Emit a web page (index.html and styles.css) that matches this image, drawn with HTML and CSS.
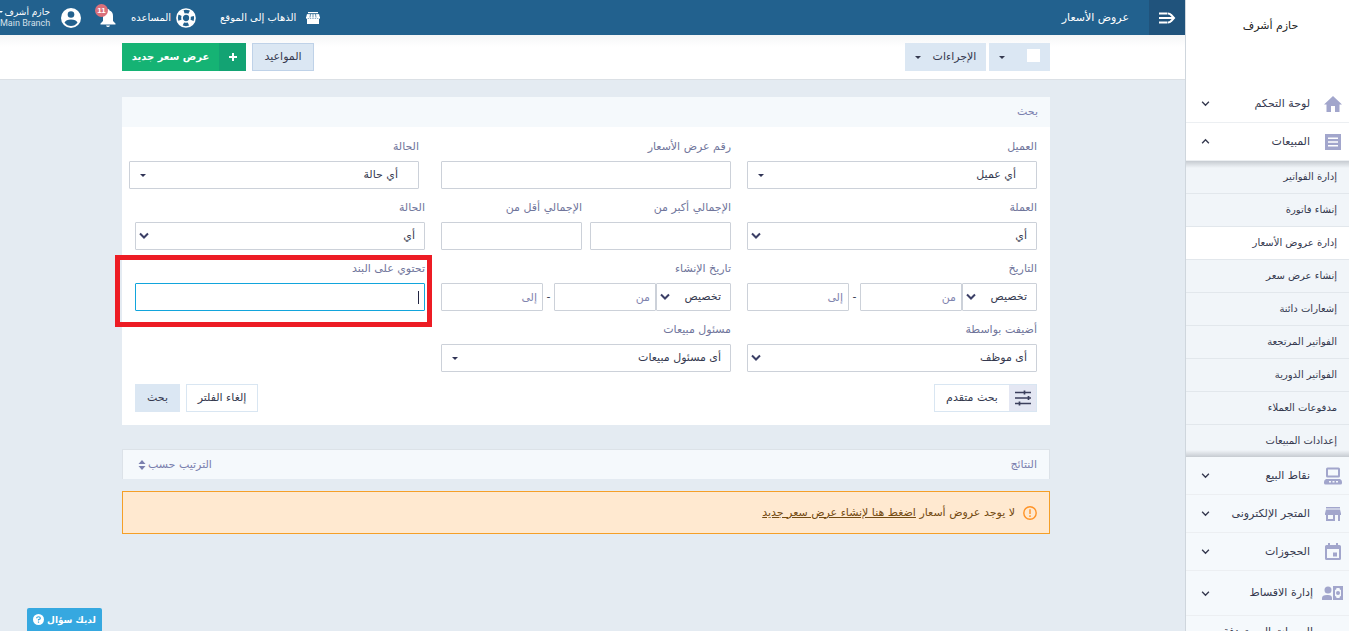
FILE: index.html
```html
<!DOCTYPE html>
<html lang="ar" dir="rtl">
<head>
<meta charset="utf-8">
<title>عروض الأسعار</title>
<link rel="stylesheet" href="styles.css">
</head>
<body>
<div class="app">
  <aside class="sidebar">
    <div class="brand">حازم أشرف</div>
    <nav>
      <a class="nav-item" href="#"><svg class="nav-icon" viewBox="0 0 18 18"><path d="M9 1 0 9.500h2.500V17h4.500v-6h4v6h4.500V9.500H18z"/></svg><span>لوحة التحكم</span><svg class="chev" viewBox="0 0 8 8"><path d="M1 2.500 4 5.500 7 2.500"/></svg></a>
      <a class="nav-item" href="#"><svg class="nav-icon" viewBox="0 0 18 18"><path fill-rule="evenodd" d="M1 1h16v16H1zM4 4.500v1.500h10V4.500zM4 8.200v1.600h10V8.200zM4 12v1.500h10V12z"/></svg><span>المبيعات</span><svg class="chev" viewBox="0 0 8 8"><path d="M1 5.500 4 2.500 7 5.500"/></svg></a>
      <div class="subnav">
        <a href="#">إدارة الفواتير</a>
        <a href="#">إنشاء فاتورة</a>
        <a href="#" class="current">إدارة عروض الأسعار</a>
        <a href="#">إنشاء عرض سعر</a>
        <a href="#">إشعارات دائنة</a>
        <a href="#">الفواتير المرتجعة</a>
        <a href="#">الفواتير الدورية</a>
        <a href="#">مدفوعات العملاء</a>
        <a href="#">إعدادات المبيعات</a>
      </div>
      <a class="nav-item soft" href="#"><svg class="nav-icon" viewBox="0 0 18 18"><path fill-rule="evenodd" d="M2 2Q2 .5 3.500.5h11Q16 .5 16 2v7q0 1.500-1.500 1.500h-11Q2 10.500 2 9zM4 2.500v6h10v-6zM2 12h14q2 1 2 3v1q0 1.500-1.500 1.500h-15Q0 17.500 0 16v-1q0-2 2-3zM5 14v1.500h2V14zM8.500 14v1.500h2V14zM12 14v1.500h2V14z"/></svg><span>نقاط البيع</span><svg class="chev" viewBox="0 0 8 8"><path d="M1 2.500 4 5.500 7 2.500"/></svg></a>
      <a class="nav-item soft" href="#"><svg class="nav-icon" viewBox="0 0 18 18"><path fill-rule="evenodd" d="M2 2h14v1.500H2zM2 4.500h14l1 4V10h-1v6h-2v-6h-3v6H2v-6H1V8.500zM4 10v4h5v-4z"/></svg><span>المتجر الإلكترونى</span><svg class="chev" viewBox="0 0 8 8"><path d="M1 2.500 4 5.500 7 2.500"/></svg></a>
      <a class="nav-item soft" href="#"><svg class="nav-icon" viewBox="0 0 18 18"><path fill-rule="evenodd" d="M4 0h2v2h6V0h2v2h1.500Q17 2 17 3.500v12q0 1.500-1.500 1.500h-13Q1 17 1 15.500v-12Q1 2 2.500 2H4zM3 6v9h12V6zM9 9.500h4v4H9z"/></svg><span>الحجوزات</span><svg class="chev" viewBox="0 0 8 8"><path d="M1 2.500 4 5.500 7 2.500"/></svg></a>
      <a class="nav-item soft tall" href="#"><svg class="nav-icon wide" viewBox="0 0 22 18"><circle cx="6" cy="6" r="3.500"/><path fill-rule="evenodd" d="M0 16v-2q0-3 5-3h1q4 0 4 3v2zM11 2h10v14H11zM13 6v6q1.500 0 1.500 2h3q0-2 1.500-2V6q-1.500 0-1.500-2h-3q0 2-1.500 2z"/><circle cx="16" cy="9" r="2"/></svg><span>إدارة الاقساط</span><svg class="chev" viewBox="0 0 8 8"><path d="M1 2.500 4 5.500 7 2.500"/></svg></a>
      <a class="nav-item soft short" href="#"><svg class="nav-icon wide" viewBox="0 0 22 18"></svg><span>المبيعات المستهدفة</span></a>
    </nav>
  </aside>

  <main class="main">
    <header class="topbar">
      <button class="collapse" type="button" aria-label="القائمة"><svg viewBox="0 0 18 14"><path d="M1 2.500h8.500M1 7h15M1 11.500h8.500M10 2.500Q12 2.500 13 3.800L16 7l-3 3.200Q12 11.500 10 11.500"/></svg></button>
      <h1>عروض الأسعار</h1>
      <div class="top-links">
        <a class="site" href="#"><svg viewBox="0 0 16 14"><path d="M3 1h10v1.500H3zM2 3h12l1 4H1zM2 8h12v5H2z"/><path d="M1 6h14v1.200q-1.200 1.500-2.300 0-1.200 1.500-2.400 0-1.200 1.500-2.300 0-1.200 1.500-2.400 0-1.200 1.500-2.300 0-1.200 1.500-2.300 0z"/><path class="cut" d="M5.500 3 5 6.500M8 3v3.500M10.500 3l.5 3.500M2 2.700h12"/></svg><span>الذهاب إلى الموقع</span></a>
        <a class="help" href="#"><svg viewBox="0 0 20 20"><circle class="ring" cx="10" cy="10" r="9"/><circle class="ring" cx="10" cy="10" r="4"/><circle class="float" cx="10" cy="10" r="6.500" transform="rotate(22 10 10)"/></svg><span>المساعده</span></a>
        <a class="bell" href="#" aria-label="الإشعارات"><svg viewBox="0 0 16 19"><path d="M8 1q1.500 0 1.500 1.600Q13 4 13 8v5l2.500 2.500v1H.5v-1L3 13V8q0-4 3.500-5.400Q6.500 1 8 1zM6 17.500h4q-.5 1.500-2 1.500t-2-1.500z"/></svg><b>11</b></a>
        <a class="user" href="#"><svg viewBox="0 0 20 20"><circle cx="10" cy="10" r="10"/><circle class="cutfill" cx="10" cy="6.500" r="3.300"/><path class="cutfill" d="M3.500 14.500q1.500-3 6.500-3t6.500 3Q14 18 10 18t-6.500-3.500z"/></svg><span class="who"><span class="who-name">حازم أشرف<i class="tri"></i></span><small dir="ltr">Main Branch</small></span></a>
      </div>
    </header>

    <div class="toolbar">
      <div class="group">
        <button class="btn pick" type="button" aria-label="تحديد"><i class="box"></i><i class="tri"></i></button>
        <button class="btn actions" type="button">الإجراءات<i class="tri"></i></button>
      </div>
      <div class="group wide-gap">
        <button class="btn outlined" type="button">المواعيد</button>
        <button class="btn create" type="button"><span class="plus"><svg viewBox="0 0 10 10"><path d="M5 1v8M1 5h8"/></svg></span><span class="create-text">عرض سعر جديد</span></button>
      </div>
    </div>

    <div class="content">
      <form class="card">
        <h2 class="card-head">بحث</h2>
        <div class="card-body">
          <div class="filters">
            <div class="field"><label for="client">العميل</label><select id="client" class="small-arrow inset"><option>أي عميل</option></select></div>
            <div class="field"><label for="number">رقم عرض الأسعار</label><input id="number" type="text"></div>
            <div class="field shifted"><label for="state1">الحالة</label><select id="state1" class="small-arrow inset"><option>أي حالة</option></select></div>

            <div class="field"><label for="currency">العملة</label><select id="currency"><option>أي</option></select></div>
            <div class="pair">
              <div class="field"><label for="min">الإجمالي أكبر من</label><input id="min" type="text"></div>
              <div class="field"><label for="max">الإجمالي أقل من</label><input id="max" type="text"></div>
            </div>
            <div class="field"><label for="state2">الحالة</label><select id="state2"><option>أي</option></select></div>

            <div class="field"><label for="date">التاريخ</label><div class="range"><select id="date"><option>تخصيص</option></select><input type="text" placeholder="من" aria-label="التاريخ من"><span>-</span><input type="text" placeholder="إلى" aria-label="التاريخ إلى"></div></div>
            <div class="field"><label for="created">تاريخ الإنشاء</label><div class="range"><select id="created"><option>تخصيص</option></select><input type="text" placeholder="من" aria-label="تاريخ الإنشاء من"><span>-</span><input type="text" placeholder="إلى" aria-label="تاريخ الإنشاء إلى"></div></div>
            <div class="field marked"><label for="item">تحتوي على البند</label><input id="item" class="active" type="text"></div>

            <div class="field"><label for="staff">أضيفت بواسطة</label><select id="staff"><option>أى موظف</option></select></div>
            <div class="field"><label for="sales">مسئول مبيعات</label><select id="sales" class="small-arrow"><option>أى مسئول مبيعات</option></select></div>
          </div>
          <div class="form-actions">
            <button class="btn advanced" type="button"><span class="sliders"><svg viewBox="0 0 18 16"><path d="M1 2.500h16M1 8h16M1 13.500h16M10.500 .5v4M14.500 6v4M5.500 11.500v4"/></svg></span><span class="advanced-text">بحث متقدم</span></button>
            <div class="group wide-gap">
              <button class="btn reset" type="reset">إلغاء الفلتر</button>
              <button class="btn submit" type="submit">بحث</button>
            </div>
          </div>
        </div>
      </form>

      <div class="results-head">
        <h2>النتائج</h2>
        <button class="sort" type="button">الترتيب حسب<svg viewBox="0 0 8 10"><path d="M4 0 7.500 4h-7zM4 10 .5 6h7z"/></svg></button>
      </div>

      <div class="notice">
        <svg viewBox="0 0 14 14"><circle cx="7" cy="7" r="6.200"/><path d="M7 3.300v4.700M7 9.300v1.700"/></svg>
        <p>لا يوجد عروض أسعار <a href="#">اضغط هنا لإنشاء عرض سعر جديد</a></p>
      </div>
    </div>
  </main>
  <button class="chat" type="button">لديك سؤال <svg viewBox="0 0 12 12"><circle cx="6" cy="6" r="6"/><path d="M4 4.600Q4 3 6 3t2 1.600Q8 5.500 6 6.200v.9M6 8.200v1.400"/></svg></button>
</div>
</body>
</html>
```
FILE: styles.css
```css
* { box-sizing: border-box; }
body {
  margin: 0;
  font-family: "DejaVu Sans", sans-serif;
  font-size: 11px;
  line-height: 20px;
  color: #35394f;
  background: #e4ebf2;
}
a { color: inherit; text-decoration: none; }
button, input, select { font: inherit; color: inherit; margin: 0; }
button { border: 0; padding: 0; background: none; }
h1, h2, p { margin: 0; font-size: inherit; font-weight: normal; }

.app { display: flex; height: 100vh; overflow: hidden; }

/* Sidebar */
.sidebar { flex: 0 0 164px; overflow: hidden; background: #fff; border-left: 1px solid #cfd6dd; }
.brand { height: 85px; padding: 16px 0 0 6px; text-align: center; color: #222; }
.nav-item {
  display: flex;
  align-items: center;
  height: 38px;
  padding: 0 7px 0 15px;
  border-bottom: 1px solid #eceff2;
}
.nav-item span { flex: 1; white-space: nowrap; }
.nav-item.soft { background: #f5f9fc; }
.nav-item.tall { height: 45px; padding-right: 5px; }
.nav-item.short { height: 32px; padding-right: 5px; }
.nav-icon { width: 18px; height: 18px; margin-left: 14px; fill: #a2a6cc; }
.nav-icon.wide { width: 22px; margin-left: 9px; }
.chev { width: 9px; height: 9px; fill: none; stroke: #35394f; stroke-width: 1.200; }
.subnav {
  background: linear-gradient(#c6cbd1, transparent 7px), linear-gradient(to top, #c6cbd1, transparent 7px), #f1f5f9;
}
.subnav a { display: block; height: 33px; padding: 6px 12px; font-size: 10px; border-bottom: 1px solid #e2e7ec; }
.subnav .current { background: #fff; }
.subnav a:last-child { height: 32px; border-bottom: 0; }

/* Top bar */
.main { flex: 1; min-width: 0; }
.topbar { display: flex; align-items: center; height: 35px; background: #22618e; color: #fff; }
.collapse { align-self: stretch; width: 36px; background: #20537c; }
.collapse svg { display: block; width: 18px; height: 14px; margin: 0 auto; fill: none; stroke: #fff; stroke-width: 2; }
.topbar h1 { padding-right: 20px; }
.top-links { display: flex; align-items: center; margin-right: auto; font-size: 10px; white-space: nowrap; }
.top-links a { display: flex; align-items: center; }
.top-links svg { fill: #fff; }
.site { gap: 9px; margin-left: 24px; }
.site svg { width: 16px; height: 14px; }
.site .cut { stroke: #22618e; stroke-width: 0.700; fill: none; }
.help { gap: 5px; margin-left: 15px; }
.help svg { width: 20px; height: 20px; fill: none; }
.help .ring { stroke: #fff; stroke-width: 1.700; }
.help .float { stroke: #fff; stroke-width: 4.500; stroke-dasharray: 5.100 5.100; }
.bell { position: relative; margin-left: 20px; }
.top-links .bell { margin-right: 0; }
.help + .bell { margin-left: 19px; }
.bell svg { width: 16px; height: 19px; }
.bell b { position: absolute; top: -4px; right: 8px; width: 13px; height: 13px; border-radius: 50%; background: #d96f7a; font: bold 8px/13px "Liberation Sans", sans-serif; text-align: center; }
.user { gap: 11px; }
.user svg { width: 20px; height: 20px; }
.user .cutfill { fill: #22618e; }
.who { display: flex; flex-direction: column; width: 50px; line-height: 12px; }
.who-name { display: flex; align-items: center; gap: 2px; font-size: 9px; }
.who .tri { border-width: 2px 2px 0; }
.who small { text-align: right; font: 9px/11px Roboto, sans-serif; color: #d5e0ea; }
.tri { display: inline-block; border: 3px solid transparent; border-top-color: currentColor; border-bottom: 0; }

/* Toolbar */
.toolbar {
  display: flex;
  justify-content: space-between;
  align-items: center;
  height: 45px;
  padding: 0 135px 0 122px;
  background: linear-gradient(#f5f6f7, #fff 12px);
  border-bottom: 1px solid #dbe0e5;
}
.group { display: flex; gap: 3px; }
.wide-gap { gap: 6px; }
.btn { display: flex; align-items: center; justify-content: center; height: 28px; background: #dbe7f3; }
.pick { width: 61px; gap: 22px; }
.pick .box { width: 13px; height: 13px; margin-bottom: 3px; background: #fff; }
.actions { width: 81px; gap: 12px; }
.outlined { width: 62px; border: 1px solid #bfd2e8; }
.create { width: 124px; background: #15b374; color: #fff; font-weight: bold; }
.create .plus { display: flex; align-items: center; justify-content: center; align-self: stretch; width: 27px; background: #13a373; }
.plus svg { width: 10px; height: 10px; stroke: #fff; stroke-width: 2; }
.create-text { flex: 1; font-size: 10px; }

/* Search card */
.content { padding: 17px 135px 0 122px; }
.card { background: #fff; border-radius: 2px 2px 0 0; }
.card-head { height: 30px; padding: 5px 12px; background: #f5f9fc; color: #7a7fae; }
.card-body { padding: 10px 13px 13px; }
.filters { display: grid; grid-template-columns: repeat(3, minmax(0, 1fr)); column-gap: 16px; row-gap: 9px; }
.field label { display: block; margin-bottom: 4px; color: #70759b; }
.field input, .field select {
  display: block;
  width: 100%;
  height: 28px;
  padding: 0 9px;
  border: 1px solid #ccd1d9;
  border-radius: 1px;
  background-color: #fff;
}
.field input::placeholder { color: #7f84ae; opacity: 1; }
.field input { padding: 0 5px; }
.field select {
  appearance: none;
  background-image: url("data:image/svg+xml,%3Csvg xmlns='http://www.w3.org/2000/svg' viewBox='0 0 10 8'%3E%3Cpath d='M1 1.500 5 5.500 9 1.500' fill='none' stroke='%233b3f66' stroke-width='2'/%3E%3C/svg%3E");
  background-repeat: no-repeat;
  background-position: 3px center;
  background-size: 10px 8px;
}
.field select.small-arrow {
  background-image: url("data:image/svg+xml,%3Csvg xmlns='http://www.w3.org/2000/svg' viewBox='0 0 6 3'%3E%3Cpath d='M0 0h6L3 3z' fill='%23303456'/%3E%3C/svg%3E");
  background-position: 10px center;
  background-size: 6px 3px;
}
.field select.inset { padding-right: 20px; }
.shifted { margin-right: 6px; margin-left: -6px; }
.pair { display: grid; grid-template-columns: 1fr 1fr; gap: 8px; }
.range { display: flex; align-items: center; }
.range select { flex: 0 0 75px; }
.range input { flex: 1; min-width: 0; }
.range span { flex: 0 0 11px; text-align: center; }
.marked { position: relative; }
.marked::after { content: ""; position: absolute; inset: -4px -7px -16px -20px; border: 5px solid #ed1c24; pointer-events: none; }
.field input.active {
  border-color: #12a5dc;
  background: linear-gradient(#222643, #222643) no-repeat right 5px center / 1px 13px;
}
.form-actions { display: flex; justify-content: space-between; margin-top: 12px; }
.advanced { width: 103px; border: 1px solid #d9e6f2; background: #fff; }
.sliders { display: flex; align-items: center; justify-content: center; align-self: stretch; width: 27px; background: #e4e7f3; }
.sliders svg { width: 18px; height: 16px; stroke: #3b3f5c; stroke-width: 1.700; }
.advanced-text { flex: 1; }
.reset { width: 72px; border: 1px solid #d9e6f2; background: #fff; }
.submit { width: 45px; }

/* Results */
.results-head {
  display: flex;
  justify-content: space-between;
  align-items: center;
  height: 30px;
  margin-top: 24px;
  padding: 0 12px 0 15px;
  border: 1px solid #dce2e8;
  border-bottom: 0;
  background: #f5f9fc;
  color: #7a7fae;
}
.sort { display: flex; align-items: center; gap: 2px; }
.sort svg { width: 8px; height: 10px; fill: #7a7fae; }
.notice {
  display: flex;
  align-items: center;
  gap: 8px;
  height: 43px;
  margin-top: 12px;
  padding: 0 12px;
  border: 1px solid #f59f27;
  background: #ffe9d0;
  color: #744b12;
}
.notice svg { width: 14px; height: 14px; fill: none; stroke: #ff9326; stroke-width: 1.400; }
.notice a { text-decoration: underline; }

.chat {
  position: fixed;
  bottom: 0;
  left: 27px;
  display: flex;
  align-items: center;
  justify-content: center;
  gap: 3px;
  width: 75px;
  height: 23px;
  border-radius: 2px 2px 0 0;
  background: #36a8e0;
  color: #fff;
  font-size: 9px;
  font-weight: bold;
  white-space: nowrap;
}
.chat svg { width: 11px; height: 11px; fill: #fff; }
.chat path { fill: none; stroke: #36a8e0; stroke-width: 1.300; }
```
